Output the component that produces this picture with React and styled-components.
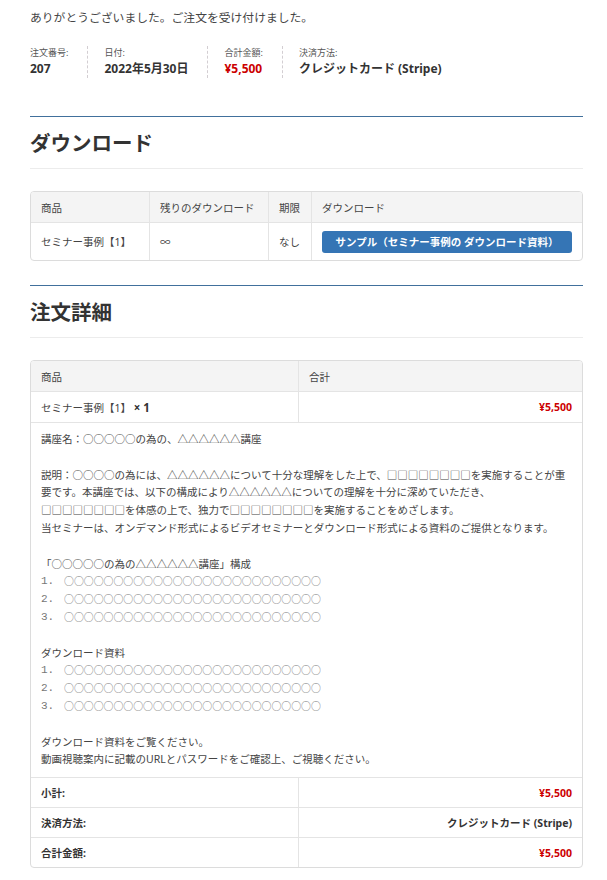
import React from 'react';
import styled, { createGlobalStyle } from 'styled-components';

const GlobalStyle = createGlobalStyle`
  body {
    margin: 0;
    background: #fff;
    font-family: "Noto Sans", "Noto Sans CJK JP", sans-serif;
    color: #444;
  }
`;

const Page = styled.div`
  padding: 8px 24px 20px 30px;
  width: 553px;
`;

const Notice = styled.p`
  margin: 0;
  font-size: 11.8px;
  line-height: 18px;
  color: #444;
`;

const Overview = styled.ul`
  display: flex;
  list-style: none;
  margin: 20px 0 0;
  padding: 0;
`;

const OverviewItem = styled.li`
  padding-right: 19px;
  margin-right: 16px;
  border-right: 1px dashed #d3ced2;
  &:last-child {
    border-right: 0;
  }
`;

const OverviewLabel = styled.div`
  font-size: 9px;
  line-height: 14px;
  color: #555;
`;

const OverviewValue = styled.div`
  font-size: 12px;
  line-height: 18px;
  font-weight: 700;
  color: ${(props) => (props.$price ? '#cc0000' : '#333')};
`;

const Section = styled.section`
  margin-top: ${(props) => props.$top}px;
  border-top: 1px solid #41709c;
`;

const Heading = styled.h2`
  margin: 0;
  padding: 11px 0 10px;
  font-size: 20.5px;
  line-height: 30px;
  font-weight: 700;
  color: #333;
  border-bottom: 1px solid #ececec;
`;

const Table = styled.table`
  margin-top: 22px;
  width: 100%;
  table-layout: fixed;
  border-collapse: separate;
  border-spacing: 0;
  border: 1px solid #dcdcdc;
  border-radius: 4px;
  overflow: hidden;
  font-size: 10.5px;
  color: #444;
`;

const Th = styled.th`
  background: #f4f4f4;
  font-weight: 400;
  text-align: left;
  height: 30px;
  padding: 0 10px;
  border-left: ${(props) => (props.$first ? '0' : '1px solid #e4e4e4')};
`;

const Td = styled.td`
  height: ${(props) => props.$h || 29}px;
  padding: 0 10px;
  border-top: 1px solid #e4e4e4;
  border-left: ${(props) => (props.$first ? '0' : '1px solid #e4e4e4')};
  text-align: ${(props) => (props.$right ? 'right' : 'left')};
  font-weight: ${(props) => (props.$bold ? 700 : 400)};
  color: ${(props) => (props.$price ? '#cc0000' : props.$bold ? '#333' : '#444')};
  white-space: nowrap;
`;

const Quantity = styled.strong`
  font-size: 11.5px;
  color: #333;
`;

const MetaCell = styled.td`
  padding: 8px 10px;
  border-top: 1px solid #e4e4e4;
  line-height: 17.8px;
  color: #444;
`;

const MetaLine = styled.div`
  min-height: 17.8px;
  white-space: nowrap;
`;

const ListLine = styled.div`
  display: flex;
  align-items: center;
  height: 17.8px;
  color: #777;
  white-space: nowrap;
`;

const ListNumber = styled.span`
  width: 23px;
  font-family: "Liberation Mono", monospace;
  font-size: 11px;
`;

const Circles = styled.span`
  font-size: 9.9px;
`;

const DownloadButton = styled.a`
  display: block;
  height: 22px;
  line-height: 22px;
  border-radius: 3px;
  background: #3575b5;
  color: #fff;
  font-weight: 700;
  text-align: center;
  text-decoration: none;
`;

const circles = '○'.repeat(26);

const META = [
  { text: '講座名：○○○○○の為の、△△△△△△講座' },
  { text: '' },
  { text: '説明：○○○○の為には、△△△△△△について十分な理解をした上で、□□□□□□□□を実施することが重' },
  { text: '要です。本講座では、以下の構成により△△△△△△についての理解を十分に深めていただき、' },
  { text: '□□□□□□□□を体感の上で、独力で□□□□□□□□を実施することをめざします。' },
  { text: '当セミナーは、オンデマンド形式によるビデオセミナーとダウンロード形式による資料のご提供となります。' },
  { text: '' },
  { text: '「○○○○○の為の△△△△△△講座」構成' },
  { num: '1.' },
  { num: '2.' },
  { num: '3.' },
  { text: '' },
  { text: 'ダウンロード資料' },
  { num: '1.' },
  { num: '2.' },
  { num: '3.' },
  { text: '' },
  { text: 'ダウンロード資料をご覧ください。' },
  { text: '動画視聴案内に記載のURLとパスワードをご確認上、ご視聴ください。' },
];

const OVERVIEW = [
  { label: '注文番号:', value: '207' },
  { label: '日付:', value: '2022年5月30日' },
  { label: '合計金額:', value: '¥5,500', price: true },
  { label: '決済方法:', value: 'クレジットカード (Stripe)' },
];

const TOTALS = [
  { label: '小計:', value: '¥5,500', price: true },
  { label: '決済方法:', value: 'クレジットカード (Stripe)' },
  { label: '合計金額:', value: '¥5,500', price: true },
];

export default function App() {
  return (
    <Page>
      <GlobalStyle />
      <Notice>ありがとうございました。ご注文を受け付けました。</Notice>
      <Overview>
        {OVERVIEW.map((item) => (
          <OverviewItem key={item.label}>
            <OverviewLabel>{item.label}</OverviewLabel>
            <OverviewValue $price={item.price}>{item.value}</OverviewValue>
          </OverviewItem>
        ))}
      </Overview>

      <Section $top={38}>
        <Heading>ダウンロード</Heading>
        <Table>
          <colgroup>
            <col style={{ width: 118 }} />
            <col style={{ width: 119 }} />
            <col style={{ width: 43 }} />
            <col />
          </colgroup>
          <thead>
            <tr>
              <Th $first>商品</Th>
              <Th>残りのダウンロード</Th>
              <Th>期限</Th>
              <Th>ダウンロード</Th>
            </tr>
          </thead>
          <tbody>
            <tr>
              <Td $first $h={37}>セミナー事例【1】</Td>
              <Td $h={37}>∞</Td>
              <Td $h={37}>なし</Td>
              <Td $h={37}>
                <DownloadButton href="#">サンプル（セミナー事例の ダウンロード資料）</DownloadButton>
              </Td>
            </tr>
          </tbody>
        </Table>
      </Section>

      <Section $top={24}>
        <Heading>注文詳細</Heading>
        <Table>
          <colgroup>
            <col style={{ width: 267 }} />
            <col />
          </colgroup>
          <thead>
            <tr>
              <Th $first>商品</Th>
              <Th>合計</Th>
            </tr>
          </thead>
          <tbody>
            <tr>
              <Td $first $h={30}>
                セミナー事例【1】 <Quantity>× 1</Quantity>
              </Td>
              <Td $h={30} $right $bold $price>¥5,500</Td>
            </tr>
            <tr>
              <MetaCell colSpan={2}>
                {META.map((line, i) =>
                  line.num ? (
                    <ListLine key={i}>
                      <ListNumber>{line.num}</ListNumber>
                      <Circles>{circles}</Circles>
                    </ListLine>
                  ) : (
                    <MetaLine key={i}>{line.text}</MetaLine>
                  )
                )}
              </MetaCell>
            </tr>
          </tbody>
          <tfoot>
            {TOTALS.map((row) => (
              <tr key={row.label}>
                <Td $first $bold>{row.label}</Td>
                <Td $right $bold $price={row.price}>{row.value}</Td>
              </tr>
            ))}
          </tfoot>
        </Table>
      </Section>
    </Page>
  );
}
